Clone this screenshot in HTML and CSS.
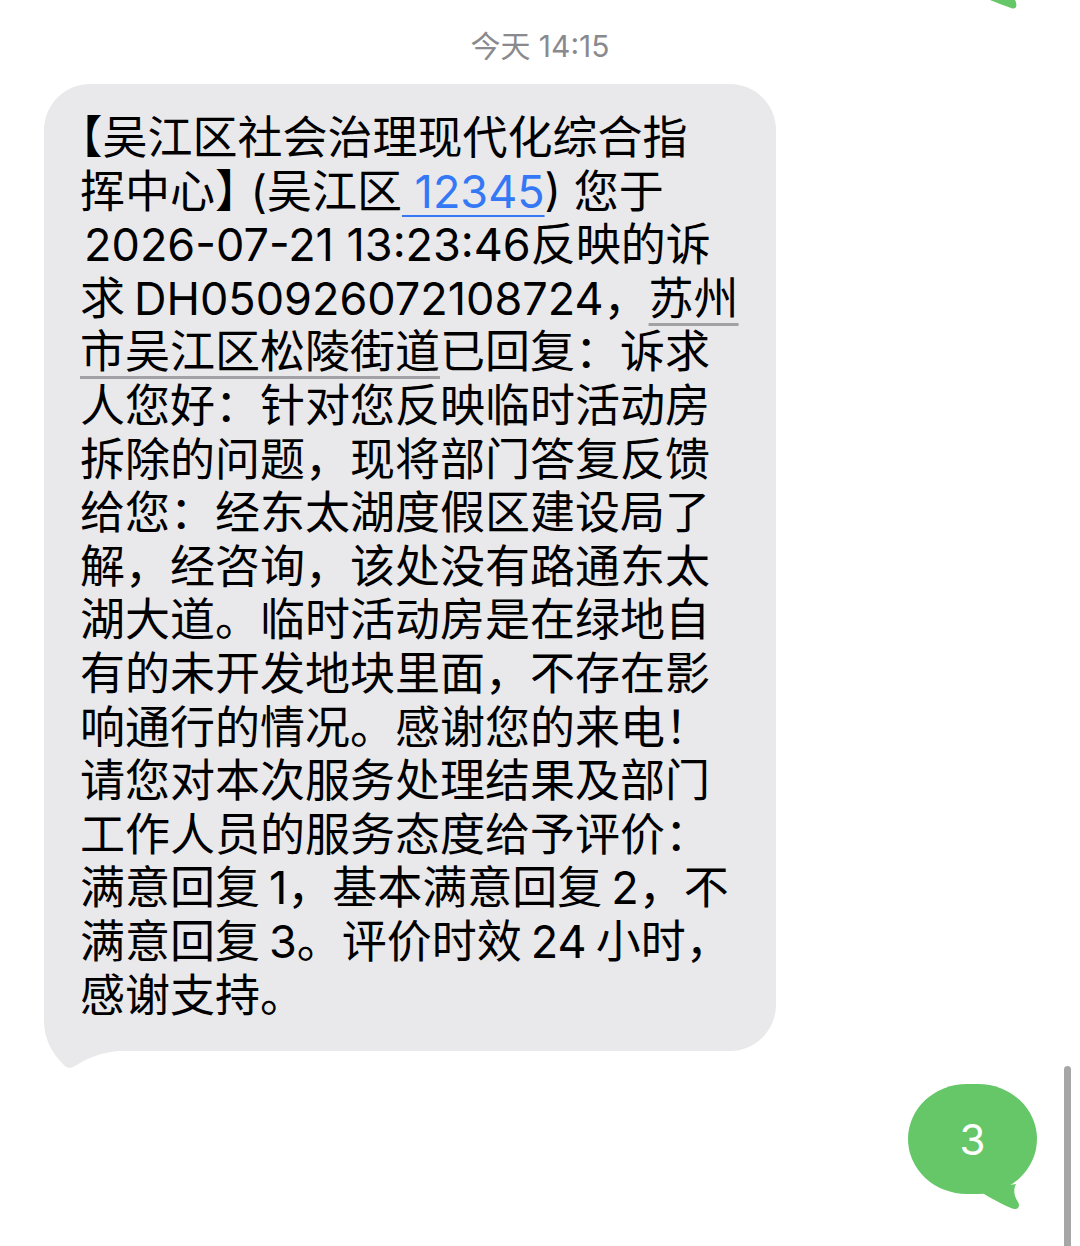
FILE: index.html
```html
<!DOCTYPE html>
<html lang="zh-CN">
<head>
<meta charset="UTF-8">
<meta name="viewport" content="width=device-width, initial-scale=1.0">
<title>信息</title>
<link rel="stylesheet" href="styles.css">
</head>
<body>
  <div class="thread">
    <!-- tail of the previous (cut off) outgoing bubble -->
    <svg class="prev-tail" width="30" height="12" viewBox="0 0 30 12"><path d="M0,0 C8,3 15,6 21,8 C26,10 28,6 25,0 Z" fill="#66c768"/></svg>

    <div class="stamp">今天 14:15</div>

    <div class="row row-in">
      <div class="bubble bubble-in">
        <div class="line"><span class="half">【</span>吴江区社会治理现代化综合指</div>
        <div class="line">挥中心<span class="half close">】</span>(吴江区<a class="link" href="#"> 12345</a>) 您于</div>
        <div class="line">&#8202;2026-07-21 13:23:46反映的诉</div>
        <div class="line">求<span class="gap"></span>DH050926072108724，<span class="addr">苏州</span></div>
        <div class="line"><span class="addr">市吴江区松陵街道</span>已回复：诉求</div>
        <div class="line">人您好：针对您反映临时活动房</div>
        <div class="line">拆除的问题，现将部门答复反馈</div>
        <div class="line">给您：经东太湖度假区建设局了</div>
        <div class="line">解，经咨询，该处没有路通东太</div>
        <div class="line">湖大道。临时活动房是在绿地自</div>
        <div class="line">有的未开发地块里面，不存在影</div>
        <div class="line">响通行的情况。感谢您的来电！</div>
        <div class="line">请您对本次服务处理结果及部门</div>
        <div class="line">工作人员的服务态度给予评价：</div>
        <div class="line">满意回复<span class="gap"></span>1，基本满意回复<span class="gap"></span>2，不</div>
        <div class="line">满意回复<span class="gap"></span>3。评价时效<span class="gap"></span>24<span class="gap"></span>小时，</div>
        <div class="line">感谢支持。</div>
        <svg class="tail-in" width="80" height="80" viewBox="0 0 80 80"><path d="M0,0 L0,30 C0,48 8,62 19,73 C22,77 26,78 31,75 C42,68 54,62 74,60 L74,0 Z" fill="#e9e9eb"/></svg>
      </div>
    </div>

    <div class="row row-out">
      <div class="bubble bubble-out">3
        <svg class="tail-out" width="60" height="50" viewBox="0 0 60 50"><path d="M0,6 C12,14 24,20 33,24 C39,27 43,23 40,18 C36,12 35,6 38,0 Z" fill="#66c768"/></svg>
      </div>
    </div>

    <div class="scrollbar"></div>
  </div>
</body>
</html>
```

FILE: styles.css
```css
body { margin: 0; background: #fff; font-family: "Inter", "Noto Sans CJK SC", sans-serif; }
.thread { position: relative; width: 1080px; height: 1246px; overflow: hidden; }
.prev-tail { position: absolute; top: 0; left: 990px; }
.stamp { padding-top: 28px; text-align: center; font-size: 30px; line-height: 36px; color: #8a8a8e; }
.row { display: flex; }
.row-in { padding-left: 44px; margin-top: 20px; }
.row-out { justify-content: flex-end; padding-right: 43px; margin-top: 33px; }
.bubble { position: relative; box-sizing: border-box; }
.bubble-in { z-index: 0; width: 732px; padding: 27px 0 29px 36px; background: #e9e9eb; border-radius: 46px; color: #000; font-size: 45px; line-height: 53.6px; }
.line { white-space: nowrap; }
.half { font-feature-settings: "halt"; }
.close { margin-right: 13px; }
.gap { display: inline-block; width: 9px; }
.link { color: #3478f6; text-decoration: underline; text-decoration-thickness: 2px; text-underline-offset: 7px; }
.addr { text-decoration: underline; text-decoration-color: #a2a2a6; text-decoration-thickness: 3px; text-underline-offset: 8px; }
.tail-in { position: absolute; z-index: -1; left: 0; top: calc(100% - 60px); }
.bubble-out { width: 129px; height: 110px; border-radius: 60px / 56px; background: #66c768; color: #fff; font-size: 42px; display: flex; align-items: center; justify-content: center; }
.tail-out { position: absolute; left: 70px; top: 100px; }
.scrollbar { position: absolute; right: 9px; top: 1066px; width: 7px; height: 200px; border-radius: 4px; background: #a6a6a6; }
```
